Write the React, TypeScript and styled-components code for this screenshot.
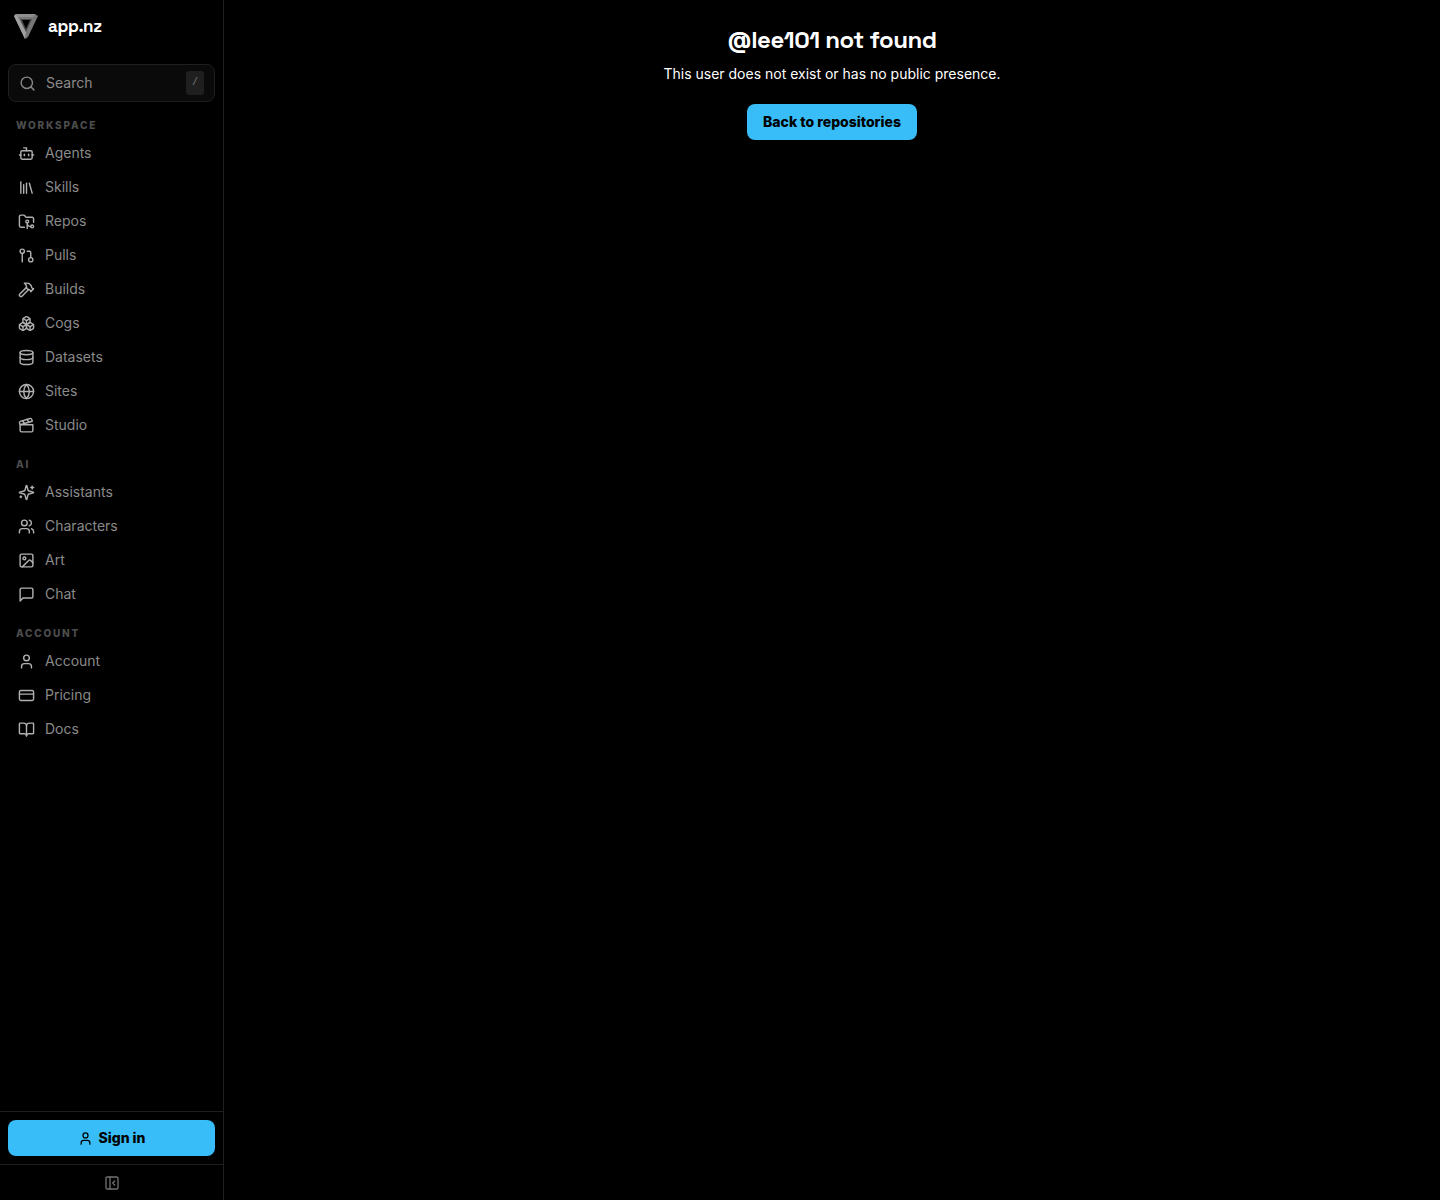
import React from "react";
import styled, { createGlobalStyle } from "styled-components";
import {
  Bot, Library, FolderGit2, GitPullRequest, Hammer, Boxes, Database, Globe, Clapperboard,
  Users, Image, User, CreditCard, BookOpen, PanelLeftClose, Search, createLucideIcon,
} from "lucide-react";
import type { LucideIcon } from "lucide-react";

const accent = "#38bdf8";
const line = "#1f1f1f";
const display = `"Space Grotesk", Inter, "Liberation Sans", sans-serif`;

const GlobalStyle = createGlobalStyle`
  *, *::before, *::after { box-sizing: border-box; }
  body {
    margin: 0;
    background: #000;
    color: #fff;
    font: 400 14px/20px Inter, "Liberation Sans", sans-serif;
  }
  a { color: inherit; text-decoration: none; }
  button, input { font: inherit; }
`;

const Shell = styled.div`
  display: grid;
  grid-template-columns: 224px minmax(0, 1fr);
  min-height: 100vh;
`;

const Sidebar = styled.aside`
  display: flex;
  flex-direction: column;
  height: 100vh;
  position: sticky;
  top: 0;
  border-right: 1px solid ${line};
`;

const Brand = styled.a`
  display: flex;
  align-items: center;
  gap: 8px;
  height: 52px;
  padding: 0 12px;
  font: 700 17px/28px ${display};
  letter-spacing: -0.02em;
`;

const SearchBox = styled.label`
  display: flex;
  align-items: center;
  gap: 10px;
  height: 38px;
  margin: 12px 8px 8px;
  padding: 0 10px;
  border: 1px solid ${line};
  border-radius: 8px;
  background: #0a0a0a;
  color: #8a8a8a;
`;

const SearchInput = styled.input`
  flex: 1;
  min-width: 0;
  padding: 0;
  border: 0;
  outline: 0;
  background: none;
  color: inherit;
  &::placeholder { color: inherit; opacity: 1; }
`;

const Key = styled.kbd`
  height: 24px;
  padding: 0 6px;
  border-radius: 3px;
  background: #1f1f1f;
  color: #777;
  font: 10px/24px "Liberation Mono", monospace;
`;

const Nav = styled.nav`
  flex: 1;
  min-height: 0;
  overflow: hidden;
  padding: 0 8px;
`;

const Section = styled.section`
  padding: 8px 0 7px;
`;

const SectionTitle = styled.h2`
  margin: 0;
  padding: 0 8px 3px;
  color: #4d4d4d;
  font-size: 10px;
  font-weight: 800;
  line-height: 15px;
  letter-spacing: 0.18em;
  text-transform: uppercase;
`;

const NavItem = styled.a`
  display: flex;
  align-items: center;
  gap: 10px;
  height: 34px;
  padding: 0 10px;
  color: #8a8a8a;
  svg { color: #b0b0b0; }
`;

const Footer = styled.div`
  padding: 8px;
  border-top: 1px solid ${line};
`;

const Primary = styled.button<{ $wide?: boolean }>`
  display: ${(p) => (p.$wide ? "flex" : "inline-flex")};
  align-items: center;
  justify-content: center;
  gap: 6px;
  width: ${(p) => (p.$wide ? "100%" : "auto")};
  height: 36px;
  padding: 0 16px;
  border: 0;
  border-radius: 8px;
  background: ${accent};
  color: #000;
  font-weight: 800;
  cursor: pointer;
`;

const Collapse = styled.button`
  display: flex;
  align-items: center;
  justify-content: center;
  height: 36px;
  padding: 0;
  border: 0;
  border-top: 1px solid ${line};
  background: none;
  color: #707070;
`;

const Main = styled.main`
  padding: 24px;
  text-align: center;
`;

const Title = styled.h1`
  margin: 0 0 8px;
  font: 700 24px/32px ${display};
  letter-spacing: -0.02em;
`;

const Message = styled.p`
  margin: 0 0 20px;
`;

const Sparkles = createLucideIcon("Sparkles", [
  ["path", {
    d: "M9.937 15.5A2 2 0 0 0 8.5 14.063l-6.135-1.582a.5.5 0 0 1 0-.962L8.5 9.936A2 2 0 0 0 9.937 8.5l1.582-6.135a.5.5 0 0 1 .963 0L14.063 8.5A2 2 0 0 0 15.5 9.937l6.135 1.581a.5.5 0 0 1 0 .964L15.5 14.063a2 2 0 0 0-1.437 1.437l-1.582 6.135a.5.5 0 0 1-.963 0z",
    key: "star",
  }],
  ["path", { d: "M20 3v4", key: "a" }],
  ["path", { d: "M22 5h-4", key: "b" }],
  ["path", { d: "M4 17v2", key: "c" }],
  ["path", { d: "M5 18H3", key: "d" }],
]);

const ChatBubble = createLucideIcon("ChatBubble", [
  ["path", { d: "M21 15a2 2 0 0 1-2 2H7l-4 4V5a2 2 0 0 1 2-2h14a2 2 0 0 1 2 2z", key: "bubble" }],
]);

const Logo = () => (
  <svg width="28" height="28" viewBox="0 0 28 28" aria-hidden="true">
    <path d="M2 4 4 2H23L26 4 16 25 13 27Z" fill="#767676" />
    <path d="M2 4 4 2 6 5 14 20 13 27Z" fill="#a0a0a0" />
    <path d="M4 2H23L21 5H6Z" fill="#8e8e8e" />
    <path d="M8 7H20L14 20Z" fill="#4a4a4a" />
    <path d="M10 8H18L14 17Z" fill="#000" />
  </svg>
);

const sections: { title: string; items: [string, LucideIcon][] }[] = [
  {
    title: "Workspace",
    items: [
      ["Agents", Bot], ["Skills", Library], ["Repos", FolderGit2], ["Pulls", GitPullRequest],
      ["Builds", Hammer], ["Cogs", Boxes], ["Datasets", Database], ["Sites", Globe], ["Studio", Clapperboard],
    ],
  },
  { title: "AI", items: [["Assistants", Sparkles], ["Characters", Users], ["Art", Image], ["Chat", ChatBubble]] },
  { title: "Account", items: [["Account", User], ["Pricing", CreditCard], ["Docs", BookOpen]] },
];

export default function App() {
  return (
    <>
      <GlobalStyle />
      <Shell>
        <Sidebar>
          <Brand href="#"><Logo />app.nz</Brand>
          <SearchBox>
            <Search size={17} strokeWidth={2} aria-hidden="true" />
            <SearchInput type="text" placeholder="Search" aria-label="Search" />
            <Key>/</Key>
          </SearchBox>
          <Nav>
            {sections.map((s) => (
              <Section key={s.title}>
                <SectionTitle>{s.title}</SectionTitle>
                {s.items.map(([label, Icon]) => (
                  <NavItem key={label} href="#">
                    <Icon size={17} strokeWidth={2} aria-hidden="true" />
                    {label}
                  </NavItem>
                ))}
              </Section>
            ))}
          </Nav>
          <Footer>
            <Primary $wide type="button"><User size={15} aria-hidden="true" />Sign in</Primary>
          </Footer>
          <Collapse type="button" aria-label="Collapse sidebar"><PanelLeftClose size={16} /></Collapse>
        </Sidebar>
        <Main>
          <Title>@lee101 not found</Title>
          <Message>This user does not exist or has no public presence.</Message>
          <Primary as="a" href="#">Back to repositories</Primary>
        </Main>
      </Shell>
    </>
  );
}
